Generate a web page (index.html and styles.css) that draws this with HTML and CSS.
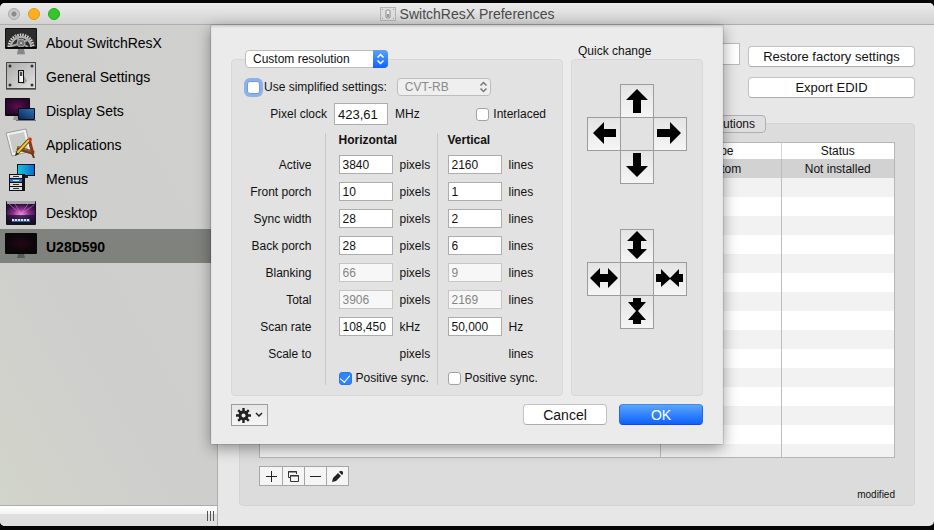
FILE: index.html
```html
<!DOCTYPE html>
<html lang="en">
<head>
    <meta charset="UTF-8">
    <title>SwitchResX Preferences</title>
    <meta name="viewport" content="width=device-width, initial-scale=1.0">
    <link rel="stylesheet" href="styles.css">
</head>
<body>
    <div class="window">
        <header class="titlebar">
            <div class="lights">
                <button class="light close" aria-label="Close"></button>
                <button class="light minimize" aria-label="Minimize"></button>
                <button class="light zoom" aria-label="Zoom"></button>
            </div>
            <h1>
                <svg width="16" height="16" viewBox="0 0 16 16">
                    <rect x="0.500" y="1.500" width="15" height="13" fill="#dedede" stroke="#b4b4b4"/>
                    <rect x="6" y="4" width="4" height="8" rx="1" fill="#eee" stroke="#8c8c8c"/>
                    <path d="M7 8h2v3H7z" fill="#999"/>
                    <path d="M2 3h1v1H2zM13 3h1v1h-1zM2 12h1v1H2zM13 12h1v1h-1z" fill="#999"/>
                </svg>
                SwitchResX Preferences
            </h1>
        </header>

        <div class="content">
            <aside class="sidebar">
                <nav>
                    <a href="#about">
                        <svg width="32" height="32" viewBox="0 0 32 32">
                            <path d="M13 23h6l1 5h-8z" fill="#85878a"/>
                            <path d="M12 28h8v1h-8z" fill="#b5b5b5"/>
                            <rect y="2" width="32" height="21" rx="1" fill="#111"/>
                            <rect x="1" y="3" width="30" height="18" fill="#2c2c2c"/>
                            <path d="M4 21a12 12 0 0 1 24 0" fill="none" stroke="#d2d2d2" stroke-width="3" stroke-dasharray="1.500 1"/>
                            <path d="M6 21a10 10 0 0 1 20 0" fill="none" stroke="#b0b0b0" stroke-width="2"/>
                            <path d="M16 17L10 9M16 17l9-4M16 17l-9 3M16 17l7 4" stroke="#a5a5a5" stroke-width="2"/>
                            <circle cx="16" cy="17" r="4" fill="#777" stroke="#aaa"/>
                            <circle cx="16" cy="17" r="1" fill="#ccc"/>
                            <path d="M0 21h32v1H0z" fill="#050505"/>
                        </svg>
                        <span>About SwitchResX</span>
                    </a>
                    <a href="#general">
                        <svg width="32" height="32" viewBox="0 0 32 32">
                            <defs>
                                <linearGradient id="plate" x1="0" y1="0" x2="1" y2="1">
                                    <stop offset="0" stop-color="#aaa"/>
                                    <stop offset="1" stop-color="#e2e2e2"/>
                                </linearGradient>
                            </defs>
                            <path d="M1 29.500h30" stroke="#777"/>
                            <rect x="1.500" y="2.500" width="29" height="26" fill="url(#plate)" stroke="#484848"/>
                            <path d="M18 14l4 7-3 3-4-1z" fill="#777" opacity="0.600"/>
                            <rect x="13.500" y="10.500" width="5" height="12" fill="#c9c9c9" stroke="#111"/>
                            <path d="M15 12h2v4h-2z" fill="#444"/>
                            <path d="M15 16h3v6h-3z" fill="#f4f4f4"/>
                            <g fill="#333">
                                <circle cx="5" cy="6" r="1.500"/>
                                <circle cx="27" cy="6" r="1.500"/>
                                <circle cx="5" cy="25" r="1.500"/>
                                <circle cx="27" cy="25" r="1.500"/>
                            </g>
                        </svg>
                        <span>General Settings</span>
                    </a>
                    <a href="#sets">
                        <svg width="32" height="32" viewBox="0 0 32 32">
                            <defs>
                                <radialGradient id="purple">
                                    <stop offset="0" stop-color="#5d1048"/>
                                    <stop offset="1" stop-color="#2b0630"/>
                                </radialGradient>
                                <linearGradient id="laptop" x1="0" y1="1" x2="1" y2="0">
                                    <stop offset="0" stop-color="#0b2558"/>
                                    <stop offset="1" stop-color="#2d74b4"/>
                                </linearGradient>
                            </defs>
                            <path d="M9 22h5v4H8z" fill="#9a9a9a"/>
                            <rect y="4" width="25" height="18" rx="1" fill="#0b0b0b"/>
                            <rect x="1" y="5" width="23" height="15" fill="url(#purple)"/>
                            <rect x="13" y="14" width="17" height="12" rx="1" fill="#08101c"/>
                            <rect x="14" y="15" width="15" height="10" fill="url(#laptop)"/>
                            <path d="M11 26h20v1H11z" fill="#777"/>
                        </svg>
                        <span>Display Sets</span>
                    </a>
                    <a href="#applications">
                        <svg width="32" height="32" viewBox="0 0 32 32">
                            <path d="M3 9l3-2 4 20-3 1z" fill="#ddd" stroke="#999"/>
                            <path d="M1 5L21 1l5 22L7 28z" fill="#f2f2f2" stroke="#9b9b9b"/>
                            <path d="M4 7l15-3 4 17-15 4z" fill="#c9cbcb"/>
                            <path d="M12 20l17 5" stroke="#74411d" stroke-width="4"/>
                            <path d="M12 19l16 5" stroke="#b47138" stroke-width="1"/>
                            <path d="M24 11l4 15" stroke="#8c3820" stroke-width="3"/>
                            <path d="M27 25l2 5" stroke="#6d3318" stroke-width="2"/>
                            <path d="M12 25L24 12" stroke="#5b4510" stroke-width="4"/>
                            <path d="M12 25L24 12" stroke="#f0c92b" stroke-width="2"/>
                            <path d="M11 24l-1 4 4-2z" fill="#222"/>
                            <path d="M23 11l3 3 1-3-2-2z" fill="#e02c1c"/>
                        </svg>
                        <span>Applications</span>
                    </a>
                    <a href="#menus">
                        <svg width="32" height="32" viewBox="0 0 32 32">
                            <defs>
                                <linearGradient id="cyan">
                                    <stop offset="0" stop-color="#13c6dc"/>
                                    <stop offset="1" stop-color="#086bd5"/>
                                </linearGradient>
                            </defs>
                            <path d="M18 14h5v2h-5z" fill="#222"/>
                            <path d="M12 2h18v12H12z" fill="#08101c"/>
                            <path d="M13 3h16v10H13z" fill="url(#cyan)"/>
                            <path d="M6 12h14v17H6z" fill="#111"/>
                            <path d="M4 12h14v17H4z" fill="#111"/>
                            <path d="M5 13h12v3H5zM5 21h12v3H5zM5 25h12v3H5z" fill="#dcdcdc"/>
                            <path d="M5 17h12v3H5z" fill="#1c71dd"/>
                            <path d="M8 14.500h6M8 22.500h6M8 26.500h6" stroke="#333"/>
                            <path d="M8 18.500h6" stroke="#d5edff"/>
                        </svg>
                        <span>Menus</span>
                    </a>
                    <a href="#desktop">
                        <svg width="32" height="32" viewBox="0 0 32 32">
                            <defs>
                                <radialGradient id="aurora" cx="0.500" cy="0.600" r="0.600">
                                    <stop offset="0" stop-color="#f294dd"/>
                                    <stop offset="0.500" stop-color="#8a2d8b"/>
                                    <stop offset="1" stop-color="#271136"/>
                                </radialGradient>
                            </defs>
                            <rect x="1" y="5" width="30" height="24" rx="1" fill="#15101d"/>
                            <path d="M2 8h28v17H2z" fill="url(#aurora)"/>
                            <path d="M2 5h28v3H2z" fill="#a9a3ad"/>
                            <path d="M16 18L4 8M16 18L10 8M16 18l7-10M16 18L29 9" stroke="#d678cc" opacity="0.600"/>
                            <path d="M2 19h28v8H2z" fill="#171129" opacity="0.700"/>
                            <path d="M7 23h18v3H7z" fill="#345fa8"/>
                            <path d="M7 24h18" stroke="#d9eaff" stroke-width="2" stroke-dasharray="2 1"/>
                        </svg>
                        <span>Desktop</span>
                    </a>
                    <a href="#display" class="selected">
                        <svg width="32" height="32" viewBox="0 0 32 32">
                            <defs>
                                <radialGradient id="dark">
                                    <stop offset="0" stop-color="#240616"/>
                                    <stop offset="1" stop-color="#0a0609"/>
                                </radialGradient>
                            </defs>
                            <path d="M13 24h6l1 4h-8z" fill="#555a55"/>
                            <rect y="3" width="32" height="21" rx="1" fill="#080808"/>
                            <rect x="1" y="4" width="30" height="18" fill="url(#dark)"/>
                        </svg>
                        <span>U28D590</span>
                    </a>
                </nav>
                <div class="sidebar-bar"><span class="grip"></span></div>
            </aside>

            <main class="pane">
                <div class="pane-top">
                    <input type="text" class="display-name" aria-label="Display name">
                    <div class="pane-buttons">
                        <button class="push">Restore factory settings</button>
                        <button class="push">Export EDID</button>
                    </div>
                </div>
                <section class="tab-box">
                    <button class="tab">Custom resolutions</button>
                    <div class="list">
                        <table>
                            <colgroup><col><col class="col-type"><col class="col-status"></colgroup>
                            <thead>
                                <tr><th></th><th>Type</th><th>Status</th></tr>
                            </thead>
                            <tbody>
                                <tr class="current"><td></td><td>Custom</td><td>Not installed</td></tr>
                                <tr><td></td><td></td><td></td></tr>
                                <tr><td></td><td></td><td></td></tr>
                                <tr><td></td><td></td><td></td></tr>
                                <tr><td></td><td></td><td></td></tr>
                                <tr><td></td><td></td><td></td></tr>
                                <tr><td></td><td></td><td></td></tr>
                                <tr><td></td><td></td><td></td></tr>
                                <tr><td></td><td></td><td></td></tr>
                                <tr><td></td><td></td><td></td></tr>
                                <tr><td></td><td></td><td></td></tr>
                                <tr><td></td><td></td><td></td></tr>
                                <tr><td></td><td></td><td></td></tr>
                                <tr><td></td><td></td><td></td></tr>
                                <tr><td></td><td></td><td></td></tr>
                                <tr><td></td><td></td><td></td></tr>
                            </tbody>
                        </table>
                    </div>
                    <div class="list-footer">
                        <div class="segments">
                            <button aria-label="Add">
                                <svg width="13" height="13" viewBox="0 0 13 13"><path d="M1 6.500h11M6.500 1v11" stroke="#222"/></svg>
                            </button>
                            <button aria-label="Duplicate">
                                <svg width="13" height="13" viewBox="0 0 13 13" fill="none" stroke="#333">
                                    <path d="M3 7.500H1.500v-6h8V4M1 2h9"/>
                                    <path d="M3.500 5.500h8v6h-8zM3 6h9"/>
                                </svg>
                            </button>
                            <button aria-label="Remove">
                                <svg width="13" height="13" viewBox="0 0 13 13"><path d="M1 6.500h11" stroke="#222"/></svg>
                            </button>
                            <button aria-label="Edit">
                                <svg width="13" height="13" viewBox="0 0 13 13" fill="#222">
                                    <path d="M1 12l1-4 5-5 3 3-5 5zM8 2l1-1h2l1 1v2l-1 1z"/>
                                </svg>
                            </button>
                        </div>
                        <span class="state">modified</span>
                    </div>
                </section>
            </main>

            <form class="sheet" onsubmit="return false">
                <div class="groups">
                    <div class="group settings">
                        <div class="popup kind">
                            <select aria-label="Resolution type"><option>Custom resolution</option></select>
                            <svg class="caps" width="15" height="18" viewBox="0 0 15 18" fill="none" stroke="#fff" stroke-width="1.500">
                                <path d="M4.500 7.500l3-3 3 3M4.500 10.500l3 3 3-3"/>
                            </svg>
                        </div>

                        <div class="row simplified">
                            <label class="check"><input type="checkbox" class="focused">Use simplified settings:</label>
                            <div class="popup mode">
                                <select aria-label="Timing formula" disabled><option>CVT-RB</option></select>
                                <svg class="caps" width="15" height="18" viewBox="0 0 15 18" fill="none" stroke="#777" stroke-width="1.500">
                                    <path d="M4.500 7.500l3-3 3 3M4.500 10.500l3 3 3-3"/>
                                </svg>
                            </div>
                        </div>

                        <div class="row clock">
                            <label for="clock">Pixel clock</label>
                            <input type="text" id="clock" value="423,61">
                            <span>MHz</span>
                            <label class="check interlaced"><input type="checkbox">Interlaced</label>
                        </div>

                        <table class="timings">
                            <thead>
                                <tr><td></td><th scope="col">Horizontal</th><th scope="col">Vertical</th></tr>
                            </thead>
                            <tbody>
                                <tr>
                                    <th scope="row">Active</th>
                                    <td><label><input type="text" value="3840">pixels</label></td>
                                    <td><label><input type="text" value="2160">lines</label></td>
                                </tr>
                                <tr>
                                    <th scope="row">Front porch</th>
                                    <td><label><input type="text" value="10">pixels</label></td>
                                    <td><label><input type="text" value="1">lines</label></td>
                                </tr>
                                <tr>
                                    <th scope="row">Sync width</th>
                                    <td><label><input type="text" value="28">pixels</label></td>
                                    <td><label><input type="text" value="2">lines</label></td>
                                </tr>
                                <tr>
                                    <th scope="row">Back porch</th>
                                    <td><label><input type="text" value="28">pixels</label></td>
                                    <td><label><input type="text" value="6">lines</label></td>
                                </tr>
                                <tr>
                                    <th scope="row">Blanking</th>
                                    <td><label><input type="text" value="66" disabled>pixels</label></td>
                                    <td><label><input type="text" value="9" disabled>lines</label></td>
                                </tr>
                                <tr>
                                    <th scope="row">Total</th>
                                    <td><label><input type="text" value="3906" disabled>pixels</label></td>
                                    <td><label><input type="text" value="2169" disabled>lines</label></td>
                                </tr>
                                <tr>
                                    <th scope="row">Scan rate</th>
                                    <td><label><input type="text" value="108,450">kHz</label></td>
                                    <td><label><input type="text" value="50,000">Hz</label></td>
                                </tr>
                                <tr>
                                    <th scope="row">Scale to</th>
                                    <td><span class="unit">pixels</span></td>
                                    <td><span class="unit">lines</span></td>
                                </tr>
                            </tbody>
                            <tfoot>
                                <tr>
                                    <td></td>
                                    <td><label class="check"><input type="checkbox" checked>Positive sync.</label></td>
                                    <td><label class="check"><input type="checkbox">Positive sync.</label></td>
                                </tr>
                            </tfoot>
                        </table>
                    </div>

                    <div class="quick">
                        <h2>Quick change</h2>
                        <div class="group pads">
                            <div class="pad">
                                <button class="up" aria-label="Move up"><svg viewBox="0 0 32 32"><path d="M16 4l11 11h-7v13h-8V15H5z"/></svg></button>
                                <button class="left" aria-label="Move left"><svg viewBox="0 0 32 32"><path d="M5 15L16 4v7h12v8H16v7z"/></svg></button>
                                <button class="right" aria-label="Move right"><svg viewBox="0 0 32 32"><path d="M27 15L16 4v7H3v8h13v7z"/></svg></button>
                                <button class="down" aria-label="Move down"><svg viewBox="0 0 32 32"><path d="M16 26L5 15h7V2h8v13h7z"/></svg></button>
                            </div>
                            <div class="pad">
                                <button class="up" aria-label="Taller"><svg viewBox="0 0 32 32"><path d="M16 1l10 10h-6v8h6L16 29 6 19h6v-8H6z"/></svg></button>
                                <button class="left" aria-label="Wider"><svg viewBox="0 0 32 32"><path d="M2 15l10-10v6h8V5l10 10-10 10v-6h-8v6z"/></svg></button>
                                <button class="right" aria-label="Narrower"><svg viewBox="0 0 32 32"><path d="M2 11h5V6l9 9 9-9v5h4v8h-4v5l-9-8-9 8v-5H2z"/></svg></button>
                                <button class="down" aria-label="Shorter"><svg viewBox="0 0 32 32"><path d="M12 2h8v4h5l-8 9 8 9h-5v4h-8v-4H7l8-9-8-9h5z"/></svg></button>
                            </div>
                        </div>
                    </div>
                </div>

                <div class="actions">
                    <button class="gear" aria-label="Actions">
                        <svg width="15" height="15" viewBox="0 0 15 15">
                            <path d="M7.500 0v15M0 7.500h15M2.200 2.200l10.600 10.600M12.800 2.200L2.200 12.800" stroke="#222" stroke-width="2.400"/>
                            <circle cx="7.500" cy="7.500" r="5" fill="#222"/>
                            <circle cx="7.500" cy="7.500" r="2" fill="#eee"/>
                        </svg>
                        <svg width="8" height="6" viewBox="0 0 8 6"><path d="M1 1l3 3 3-3" fill="none" stroke="#222" stroke-width="1.500"/></svg>
                    </button>
                    <button class="push cancel">Cancel</button>
                    <button class="push ok">OK</button>
                </div>
            </form>
        </div>
    </div>
</body>
</html>
```

FILE: styles.css
```css
* {
    box-sizing: border-box;
}

body {
    margin: 0;
    padding: 3px 0 4px;
    height: 100vh;
    display: flex;
    background: #050605;
    color: #111;
    font-family: "Liberation Sans", Arial, sans-serif;
    font-size: 12px;
    line-height: 14px;
}

button, input, select {
    font: inherit;
    color: inherit;
    margin: 0;
    padding: 0;
}

svg {
    display: block;
    flex: none;
}

.window {
    flex: 1;
    display: flex;
    flex-direction: column;
    min-width: 0;
    background: #e7e7e7;
    border-radius: 5px;
    overflow: hidden;
}

/* title bar */
.titlebar {
    display: grid;
    grid-template-columns: 1fr auto 1fr;
    align-items: center;
    height: 22px;
    padding: 0 8px;
    background: linear-gradient(#ececec, #d2d2d2);
    border-bottom: 1px solid #aeaeae;
}

.titlebar h1 {
    display: flex;
    align-items: center;
    gap: 4px;
    margin: 0;
    font-size: 14px;
    font-weight: normal;
    line-height: 16px;
    color: #4a4a4a;
}

.lights {
    display: flex;
    gap: 8px;
}

.light {
    width: 12px;
    height: 12px;
    border: 1px solid #a9a9a9;
    border-radius: 50%;
}

.close {
    background: radial-gradient(circle, #8b8b8b 2px, #c9c9c9 3px);
}

.minimize {
    background: #fdb01e;
    border-color: #e09a1c;
}

.zoom {
    background: #35c62c;
    border-color: #29a620;
}

.content {
    position: relative;
    flex: 1;
    display: flex;
    min-height: 0;
}

/* sidebar */
.sidebar {
    width: 218px;
    display: flex;
    flex-direction: column;
    background: linear-gradient(60deg, #d2d5ca, #cececd 40%, #d0d0cf);
    border-right: 1px solid #b0b0b0;
}

.sidebar nav {
    flex: 1;
}

.sidebar a {
    display: flex;
    align-items: center;
    gap: 9px;
    height: 34px;
    padding-left: 5px;
    font-size: 14px;
    line-height: 18px;
    color: #000;
    text-decoration: none;
}

.sidebar a span {
    padding-top: 2px;
}

.sidebar .selected {
    background: #80827d;
    font-weight: bold;
}

.sidebar-bar {
    display: flex;
    justify-content: flex-end;
    align-items: center;
    height: 21px;
    padding-right: 3px;
    border-top: 1px solid #acacac;
    background: linear-gradient(#fff, #f3f3f3 40%, #dfdfdf 40%);
}

.grip {
    width: 7px;
    height: 10px;
    background: repeating-linear-gradient(90deg, #555 0 1px, transparent 1px 3px);
}

/* main pane */
.pane {
    flex: 1;
    display: flex;
    flex-direction: column;
    min-width: 0;
    padding: 18px 19px 20px 21px;
}

.pane-top {
    display: flex;
    align-items: flex-start;
    gap: 8px;
}

.display-name {
    flex: 1;
    min-width: 0;
    height: 22px;
    background: #fff;
    border: 1px solid #b9b9b9;
}

.pane-buttons {
    display: flex;
    flex-direction: column;
    gap: 10px;
    width: 167px;
    padding-top: 3px;
}

.push {
    height: 21px;
    background: #fff;
    border: 1px solid #c3c3c3;
    border-bottom-color: #acacac;
    border-radius: 4px;
    font-size: 13px;
    text-align: center;
}

.tab-box {
    flex: 1;
    display: flex;
    flex-direction: column;
    min-height: 0;
    margin-top: 25px;
    padding: 0 19px 5px;
    background: #dcdcdc;
    border: 1px solid #d4d4d4;
    border-radius: 4px;
}

.tab {
    align-self: flex-end;
    width: 128px;
    height: 18px;
    margin: -9px 129px 9px 0;
    padding-right: 10px;
    text-align: right;
    background: #dfdfdf;
    border: 1px solid #b0b0b0;
    border-radius: 4px;
}

.list {
    flex: 1;
    min-height: 0;
    overflow: hidden;
    background: #fff;
    border: 1px solid #b6b6b6;
}

.list table {
    width: 100%;
    table-layout: fixed;
    border-collapse: collapse;
}

.col-type {
    width: 121px;
}

.col-status {
    width: 113px;
}

.list th,
.list td {
    padding: 0;
    height: 19px;
    font-weight: normal;
    text-align: center;
    border-right: 1px solid #bdbdbd;
}

.list th {
    height: 16px;
    border-right-color: #d5d5d5;
}

.list th:last-child,
.list td:last-child {
    border-right: 0;
}

.list tr:nth-child(even) {
    background: #f2f2f2;
}

.list .current {
    background: #d2d2d2;
}

.list-footer {
    display: flex;
    justify-content: space-between;
    padding-top: 8px;
    height: 42px;
}

.segments {
    display: flex;
    height: 20px;
    border: 1px solid #a6a6a6;
    background: #f5f5f5;
}

.segments button {
    display: flex;
    align-items: center;
    justify-content: center;
    width: 22px;
    border: 0;
    background: none;
}

.segments button + button {
    border-left: 1px solid #a6a6a6;
}

.state {
    align-self: flex-end;
    font-size: 10px;
    line-height: 10px;
}

/* the sheet hangs from the title bar over the window */
.sheet {
    position: absolute;
    top: 0;
    left: 50%;
    width: 512px;
    margin-left: -256px;
    padding: 19px 20px 18px;
    background: #ebebeb;
    box-shadow: 0 4px 14px rgba(0, 0, 0, 0.4), 0 0 1px rgba(0, 0, 0, 0.6), inset 0 2px 3px -1px rgba(0, 0, 0, 0.2);
}

.groups {
    display: grid;
    grid-template-columns: 1fr 132px;
    gap: 8px;
}

.group {
    background: #e2e2e2;
    border: 1px solid #d8d8d8;
    border-radius: 4px;
}

.settings {
    margin-top: 15px;
    padding: 0 16px 10px 13px;
}

.popup {
    position: relative;
}

.popup select {
    display: block;
    appearance: none;
    width: 100%;
    height: 18px;
    padding-left: 7px;
    background: #fff;
    border: 1px solid #bdbdbd;
    border-radius: 4px;
}

.popup select:disabled {
    background: #efefef;
    color: #8a8a8a;
    opacity: 1;
}

.caps {
    position: absolute;
    top: 0;
    right: 0;
    border-radius: 0 4px 4px 0;
    pointer-events: none;
}

.kind {
    width: 143px;
    margin-top: -10px;
}

.kind .caps {
    background: linear-gradient(#5aa2fa, #0f63fb);
}

.mode {
    width: 94px;
}

.row {
    display: flex;
    align-items: center;
    gap: 7px;
}

.simplified {
    gap: 10px;
    margin: 10px 0 7px 2px;
}

.clock > label:first-child {
    width: 82px;
    text-align: right;
}

.clock input[type="text"] {
    height: 22px;
    font-size: 13px;
}

.interlaced {
    margin-left: auto;
}

.settings input[type="text"] {
    width: 54px;
    padding: 0 3px;
    background: #fff;
    border: 1px solid #adadad;
}

.check {
    display: flex;
    align-items: center;
    gap: 4px;
}

.check input {
    appearance: none;
    display: flex;
    align-items: center;
    justify-content: center;
    width: 13px;
    height: 13px;
    background: #fff;
    border: 1px solid #a3a3a3;
    border-radius: 3px;
}

.check .focused {
    border-color: #6d9ce0;
    box-shadow: 0 0 0 3px #8cb2ec;
}

.check input:checked {
    background: #2f83fb;
    border-color: #2877ee;
}

.check input:checked::after {
    content: "";
    width: 5px;
    height: 8px;
    margin-bottom: 2px;
    border: solid #fff;
    border-width: 0 1px 1px 0;
    transform: rotate(40deg);
}

.timings {
    margin-top: 8px;
    border-collapse: collapse;
}

.timings th,
.timings td {
    height: 27px;
    padding: 0;
    text-align: left;
}

.timings tr > :first-child {
    width: 80px;
    padding-right: 13px;
    text-align: right;
    font-weight: normal;
    white-space: nowrap;
}

.timings tr > :nth-child(2) {
    width: 112px;
    padding-left: 13px;
    border-left: 1px solid #c8c8c8;
}

.timings tr > :nth-child(3) {
    padding-left: 10px;
    border-left: 1px solid #c8c8c8;
}

.timings thead tr > * {
    height: 18px;
    padding-bottom: 4px;
}

.timings tfoot tr > * {
    height: 18px;
    padding-top: 4px;
}

.timings tbody label {
    display: flex;
    align-items: center;
    gap: 7px;
}

.timings input[type="text"] {
    height: 19px;
}

.timings input:disabled {
    color: #858585;
    background: #f7f7f7;
    border-color: #c6c6c6;
}

.unit {
    padding-left: 61px;
}

.quick {
    display: flex;
    flex-direction: column;
}

.quick h2 {
    margin: 0;
    padding-left: 7px;
    height: 15px;
    font-size: 12px;
    font-weight: normal;
}

.pads {
    flex: 1;
    display: flex;
    flex-direction: column;
    align-items: center;
    gap: 45px;
    padding-top: 24px;
}

.pad {
    display: grid;
    grid-template-columns: repeat(3, 33px);
    grid-template-rows: repeat(3, 33px);
    grid-template-areas: ". up ." "left . right" ". down .";
    padding: 0 1px 1px 0;
}

.pad button {
    width: 34px;
    height: 34px;
    background: linear-gradient(#e4e4e4, #f5f5f5);
    border: 1px solid #9c9c9c;
}

.up { grid-area: up; }
.left { grid-area: left; }
.right { grid-area: right; }
.down { grid-area: down; }

.actions {
    display: flex;
    align-items: flex-start;
    gap: 12px;
    margin-top: 8px;
}

.gear {
    display: flex;
    align-items: center;
    justify-content: center;
    gap: 4px;
    width: 37px;
    height: 22px;
    margin-right: auto;
    background: linear-gradient(#e6e6e6, #f6f6f6);
    border: 1px solid #9c9c9c;
}

.actions .push {
    width: 84px;
    font-size: 14px;
}

.actions .ok {
    color: #fff;
    background: linear-gradient(#5ba4fb, #0d62fe);
    border-color: #3f8af4 #1f68ee #0a4fe0;
}
```
